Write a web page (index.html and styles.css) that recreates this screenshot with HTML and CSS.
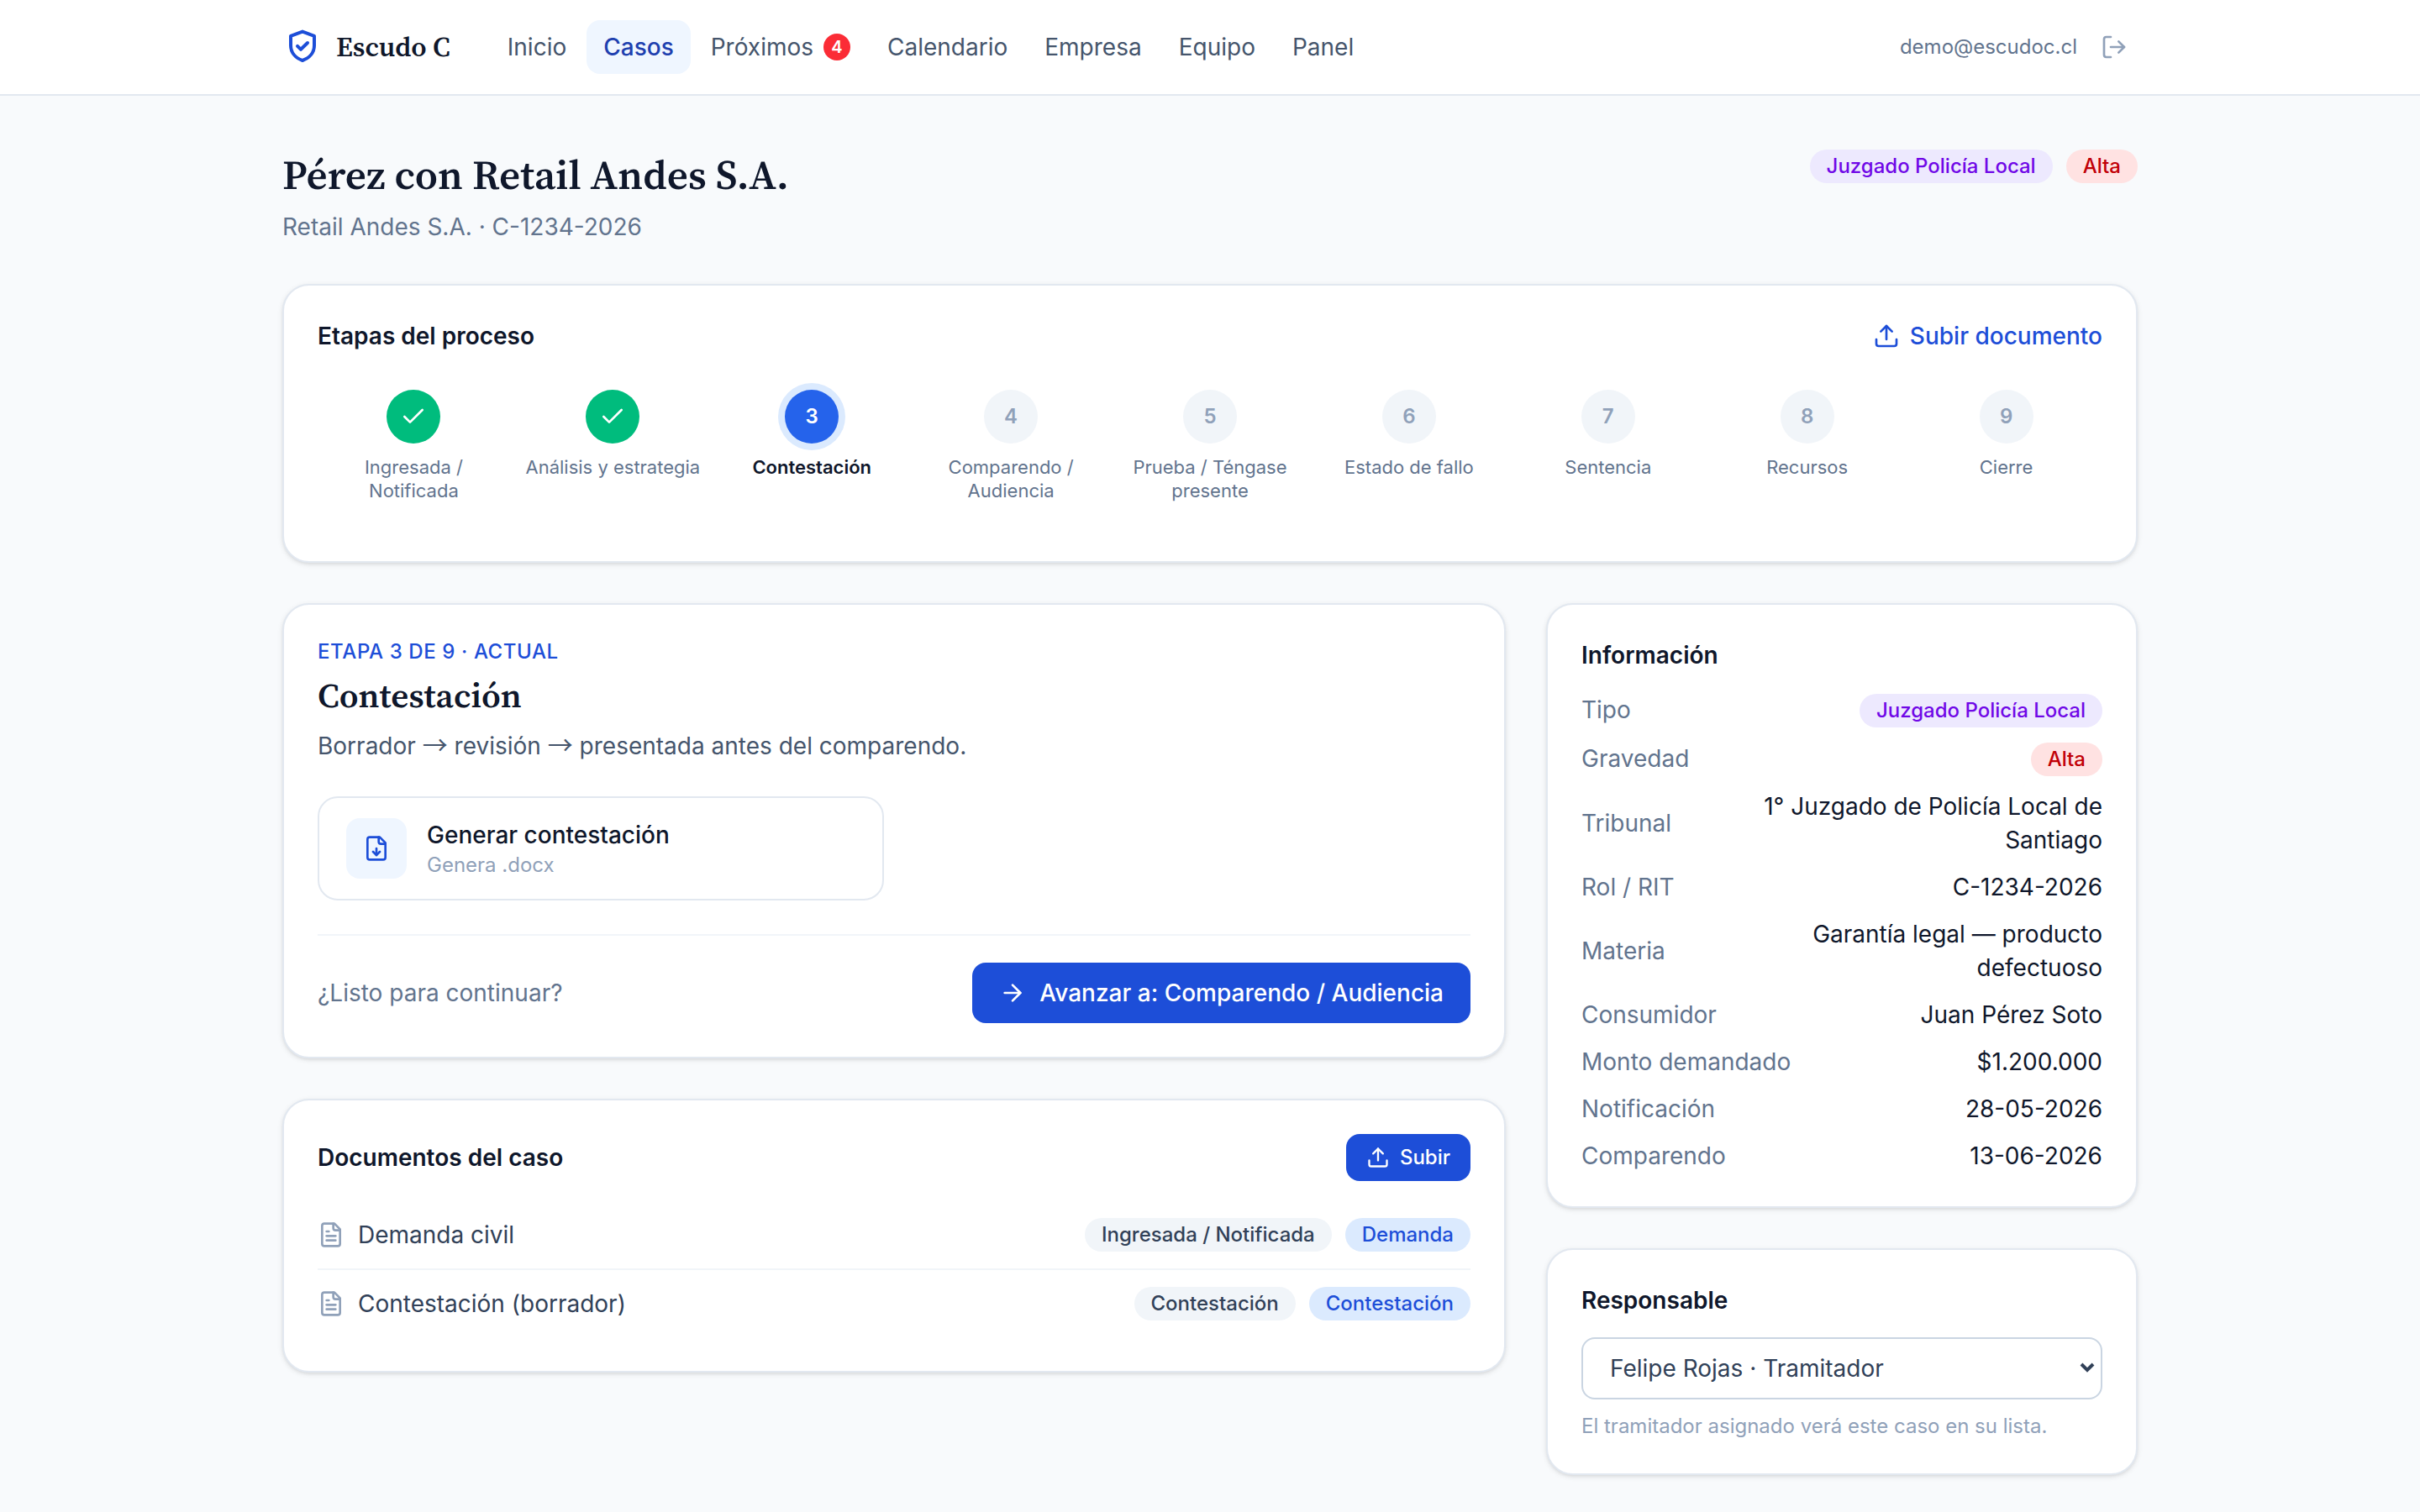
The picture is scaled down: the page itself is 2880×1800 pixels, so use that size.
FILE: index.html
```html
<!DOCTYPE html>
<html lang="es">
<head>
    <meta charset="UTF-8">
    <meta name="viewport" content="width=device-width, initial-scale=1.0">
    <title>Pérez con Retail Andes S.A. - Escudo C</title>
    <link rel="stylesheet" href="styles.css">
</head>
<body>
    <!-- Shared icons -->
    <svg class="sprite" aria-hidden="true">
        <symbol id="icon-shield" viewBox="0 0 24 24">
            <path d="M12 2.8 19 5.4V11c0 4.3-2.8 7.5-7 9-4.2-1.5-7-4.7-7-9V5.4Z"/>
            <path d="m9 11.4 2 2 4-3.9"/>
        </symbol>
        <symbol id="icon-logout" viewBox="0 0 24 24">
            <path d="M9 21H5a2 2 0 0 1-2-2V5a2 2 0 0 1 2-2h4"/>
            <path d="m16 17 5-5-5-5"/>
            <path d="M21 12H9"/>
        </symbol>
        <symbol id="icon-upload" viewBox="0 0 24 24">
            <path d="M12 3v12"/>
            <path d="m17 8-5-5-5 5"/>
            <path d="M21 15v4a2 2 0 0 1-2 2H5a2 2 0 0 1-2-2v-4"/>
        </symbol>
        <symbol id="icon-check" viewBox="0 0 24 24">
            <path d="M20 6 9 17l-5-5"/>
        </symbol>
        <symbol id="icon-arrow" viewBox="0 0 24 24">
            <path d="M5 12h14"/>
            <path d="m12 5 7 7-7 7"/>
        </symbol>
        <symbol id="icon-file-down" viewBox="0 0 24 24">
            <path d="M15 2H6a2 2 0 0 0-2 2v16a2 2 0 0 0 2 2h12a2 2 0 0 0 2-2V7Z"/>
            <path d="M14 2v4a2 2 0 0 0 2 2h4"/>
            <path d="M12 18v-6"/>
            <path d="m9 15 3 3 3-3"/>
        </symbol>
        <symbol id="icon-file-text" viewBox="0 0 24 24">
            <path d="M15 2H6a2 2 0 0 0-2 2v16a2 2 0 0 0 2 2h12a2 2 0 0 0 2-2V7Z"/>
            <path d="M14 2v4a2 2 0 0 0 2 2h4"/>
            <path d="M10 9H8"/>
            <path d="M16 13H8"/>
            <path d="M16 17H8"/>
        </symbol>
    </svg>

    <header class="topbar">
        <div class="topbar-inner">
            <a href="#" class="brand">
                <svg class="icon brand-icon" aria-hidden="true"><use href="#icon-shield"/></svg>
                <span>Escudo C</span>
            </a>
            <nav class="nav">
                <a href="#" class="nav-link">Inicio</a>
                <a href="#" class="nav-link active">Casos</a>
                <a href="#" class="nav-link">Próximos <span class="count">4</span></a>
                <a href="#" class="nav-link">Calendario</a>
                <a href="#" class="nav-link">Empresa</a>
                <a href="#" class="nav-link">Equipo</a>
                <a href="#" class="nav-link">Panel</a>
            </nav>
            <div class="account">
                <span>demo@escudoc.cl</span>
                <button type="button" class="logout" aria-label="Cerrar sesión">
                    <svg class="icon" aria-hidden="true"><use href="#icon-logout"/></svg>
                </button>
            </div>
        </div>
    </header>

    <main class="page">
        <div class="page-header">
            <div>
                <h1>Pérez con Retail Andes S.A.</h1>
                <p class="subtitle">Retail Andes S.A. · C-1234-2026</p>
            </div>
            <div class="badges">
                <span class="badge violet">Juzgado Policía Local</span>
                <span class="badge red">Alta</span>
            </div>
        </div>

        <section class="card">
            <div class="card-header">
                <h2>Etapas del proceso</h2>
                <button type="button" class="link-button">
                    <svg class="icon" aria-hidden="true"><use href="#icon-upload"/></svg>
                    Subir documento
                </button>
            </div>
            <ol class="steps">
                <li class="step done">
                    <span class="step-dot"><svg class="icon" aria-hidden="true"><use href="#icon-check"/></svg></span>
                    <span class="step-label">Ingresada / Notificada</span>
                </li>
                <li class="step done">
                    <span class="step-dot"><svg class="icon" aria-hidden="true"><use href="#icon-check"/></svg></span>
                    <span class="step-label">Análisis y estrategia</span>
                </li>
                <li class="step current">
                    <span class="step-dot">3</span>
                    <span class="step-label">Contestación</span>
                </li>
                <li class="step">
                    <span class="step-dot">4</span>
                    <span class="step-label">Comparendo / Audiencia</span>
                </li>
                <li class="step">
                    <span class="step-dot">5</span>
                    <span class="step-label">Prueba / Téngase presente</span>
                </li>
                <li class="step">
                    <span class="step-dot">6</span>
                    <span class="step-label">Estado de fallo</span>
                </li>
                <li class="step">
                    <span class="step-dot">7</span>
                    <span class="step-label">Sentencia</span>
                </li>
                <li class="step">
                    <span class="step-dot">8</span>
                    <span class="step-label">Recursos</span>
                </li>
                <li class="step">
                    <span class="step-dot">9</span>
                    <span class="step-label">Cierre</span>
                </li>
            </ol>
        </section>

        <div class="columns">
            <div class="column">
                <section class="card">
                    <p class="eyebrow">Etapa 3 de 9 · Actual</p>
                    <h2 class="stage-title">Contestación</h2>
                    <p class="stage-text">Borrador <span class="arrow">→</span> revisión <span class="arrow">→</span> presentada antes del comparendo.</p>
                    <div class="actions">
                        <button type="button" class="action">
                            <span class="action-icon"><svg class="icon" aria-hidden="true"><use href="#icon-file-down"/></svg></span>
                            <span class="action-body">
                                <span class="action-title">Generar contestación</span>
                                <span class="action-note">Genera .docx</span>
                            </span>
                        </button>
                    </div>
                    <div class="stage-footer">
                        <span>¿Listo para continuar?</span>
                        <button type="button" class="button">
                            <svg class="icon" aria-hidden="true"><use href="#icon-arrow"/></svg>
                            Avanzar a: Comparendo / Audiencia
                        </button>
                    </div>
                </section>

                <section class="card">
                    <div class="card-header">
                        <h2>Documentos del caso</h2>
                        <button type="button" class="button small">
                            <svg class="icon" aria-hidden="true"><use href="#icon-upload"/></svg>
                            Subir
                        </button>
                    </div>
                    <ul class="documents">
                        <li class="document">
                            <svg class="icon" aria-hidden="true"><use href="#icon-file-text"/></svg>
                            <span class="document-name">Demanda civil</span>
                            <span class="badge gray">Ingresada / Notificada</span>
                            <span class="badge blue">Demanda</span>
                        </li>
                        <li class="document">
                            <svg class="icon" aria-hidden="true"><use href="#icon-file-text"/></svg>
                            <span class="document-name">Contestación (borrador)</span>
                            <span class="badge gray">Contestación</span>
                            <span class="badge blue">Contestación</span>
                        </li>
                    </ul>
                </section>
            </div>

            <aside class="column">
                <section class="card">
                    <h2>Información</h2>
                    <dl class="info">
                        <div class="info-row"><dt>Tipo</dt><dd><span class="badge violet">Juzgado Policía Local</span></dd></div>
                        <div class="info-row"><dt>Gravedad</dt><dd><span class="badge red">Alta</span></dd></div>
                        <div class="info-row"><dt>Tribunal</dt><dd>1° Juzgado de Policía Local de Santiago</dd></div>
                        <div class="info-row"><dt>Rol / RIT</dt><dd>C-1234-2026</dd></div>
                        <div class="info-row"><dt>Materia</dt><dd>Garantía legal — producto defectuoso</dd></div>
                        <div class="info-row"><dt>Consumidor</dt><dd>Juan Pérez Soto</dd></div>
                        <div class="info-row"><dt>Monto demandado</dt><dd>$1.200.000</dd></div>
                        <div class="info-row"><dt>Notificación</dt><dd>28-05-2026</dd></div>
                        <div class="info-row"><dt>Comparendo</dt><dd>13-06-2026</dd></div>
                    </dl>
                </section>

                <section class="card">
                    <h2><label for="responsable">Responsable</label></h2>
                    <div class="select-wrap">
                        <select id="responsable">
                            <option>Felipe Rojas · Tramitador</option>
                        </select>
                        <svg class="chevron" viewBox="0 0 18 12" aria-hidden="true"><path d="m2 2 7 7 7-7"/></svg>
                    </div>
                    <p class="hint">El tramitador asignado verá este caso en su lista.</p>
                </section>
            </aside>
        </div>
    </main>
</body>
</html>
```

FILE: styles.css
```css
:root {
    --brand: #1d4ed8;
    --brand-light: #eff6ff;
    --slate-50: #f8fafc;
    --slate-100: #f1f5f9;
    --slate-200: #e2e8f0;
    --slate-300: #cad5e2;
    --slate-400: #90a1b9;
    --slate-500: #62748e;
    --slate-600: #45556c;
    --slate-700: #314158;
    --slate-900: #0f172b;
    --serif: "Source Serif 4", "Liberation Serif", serif;
}

* {
    margin: 0;
    padding: 0;
    box-sizing: border-box;
}

body {
    background: var(--slate-50);
    color: var(--slate-900);
    font-family: Inter, sans-serif;
    font-size: 28px;
    line-height: 40px;
}

a {
    color: inherit;
    text-decoration: none;
}

button,
select {
    font: inherit;
    color: inherit;
    background: none;
    border: none;
    cursor: pointer;
}

ol,
ul {
    list-style: none;
}

.sprite {
    display: none;
}

.icon {
    flex: none;
    width: 32px;
    height: 32px;
    fill: none;
    stroke: currentColor;
    stroke-width: 2;
    stroke-linecap: round;
    stroke-linejoin: round;
}

/* Top bar */
.topbar {
    background: #fff;
    border-bottom: 2px solid var(--slate-200);
}

.topbar-inner {
    display: flex;
    align-items: center;
    max-width: 2304px;
    margin: 0 auto;
    padding: 24px 48px;
}

.brand {
    display: flex;
    align-items: center;
    gap: 16px;
    margin-right: 48px;
    font-family: var(--serif);
    font-size: 33px;
    font-weight: 600;
}

.brand-icon {
    width: 48px;
    height: 48px;
    color: var(--brand);
}

.nav {
    display: flex;
    gap: 4px;
    color: var(--slate-600);
}

.nav-link {
    display: flex;
    align-items: center;
    gap: 12px;
    padding: 12px 20px;
    border-radius: 16px;
}

.nav-link.active {
    background: var(--brand-light);
    color: #1e40af;
    font-weight: 500;
}

.count {
    width: 32px;
    border-radius: 16px;
    background: #fb2c36;
    color: #fff;
    font-size: 20px;
    font-weight: 600;
    line-height: 32px;
    text-align: center;
}

.account {
    display: flex;
    align-items: center;
    gap: 16px;
    margin-left: auto;
    color: var(--slate-500);
    font-size: 24px;
}

.logout {
    display: flex;
    padding: 12px;
    color: var(--slate-400);
}

/* Page */
.page {
    max-width: 2304px;
    margin: 0 auto;
    padding: 64px 48px 44px;
}

.page-header {
    display: flex;
    justify-content: space-between;
    align-items: flex-start;
    margin-bottom: 48px;
}

h1 {
    font-family: var(--serif);
    font-size: 49px;
    font-weight: 600;
    line-height: 60px;
}

h2 {
    font-size: 28px;
    font-weight: 600;
    line-height: 40px;
}

.subtitle {
    margin-top: 12px;
    color: var(--slate-500);
}

.badges {
    display: flex;
    gap: 16px;
}

.badge {
    display: inline-flex;
    padding: 4px 20px;
    border-radius: 20px;
    font-size: 24px;
    font-weight: 500;
    line-height: 32px;
    white-space: nowrap;
}

.badge.violet {
    background: #ede9fe;
    color: #7008e7;
}

.badge.red {
    background: #ffe2e2;
    color: #c10007;
}

.badge.gray {
    background: var(--slate-100);
    color: var(--slate-700);
}

.badge.blue {
    background: #dbeafe;
    color: var(--brand);
}

/* Cards */
.card {
    padding: 40px;
    background: #fff;
    border: 2px solid var(--slate-200);
    border-radius: 32px;
    box-shadow: 0 2px 6px rgba(0, 0, 0, 0.1), 0 2px 4px -2px rgba(0, 0, 0, 0.1);
}

.card-header {
    display: flex;
    justify-content: space-between;
    align-items: center;
}

.link-button {
    display: flex;
    align-items: center;
    gap: 12px;
    color: var(--brand);
    font-weight: 500;
}

.button {
    display: flex;
    align-items: center;
    gap: 16px;
    padding: 16px 32px;
    border-radius: 16px;
    background: var(--brand);
    color: #fff;
    font-weight: 500;
}

.button.small {
    gap: 12px;
    padding: 12px 24px;
    font-size: 24px;
    line-height: 32px;
}

.button.small .icon {
    width: 28px;
    height: 28px;
}

/* Process steps */
.steps {
    display: flex;
    gap: 8px;
    padding: 44px 0 30px;
}

.step {
    display: flex;
    flex: 1;
    flex-direction: column;
    align-items: center;
    gap: 14px;
    color: var(--slate-500);
    text-align: center;
}

.step-dot {
    display: flex;
    align-items: center;
    justify-content: center;
    width: 64px;
    height: 64px;
    border-radius: 50%;
    background: var(--slate-100);
    color: var(--slate-400);
    font-size: 24px;
    font-weight: 600;
}

.step.done .step-dot {
    background: #00bc7d;
    color: #fff;
}

.step.current .step-dot {
    background: #2563eb;
    color: #fff;
    box-shadow: 0 0 0 8px #dbeafe;
}

.step-label {
    padding: 0 8px;
    font-size: 22px;
    line-height: 28px;
}

.step.current .step-label {
    color: var(--slate-900);
    font-weight: 600;
}

/* Columns */
.columns {
    display: grid;
    grid-template-columns: repeat(3, 1fr);
    gap: 48px;
    align-items: start;
    margin-top: 48px;
}

.column {
    display: grid;
    gap: 48px;
}

.column:first-child {
    grid-column: span 2;
}

/* Current stage */
.eyebrow {
    color: var(--brand);
    font-size: 24px;
    font-weight: 500;
    letter-spacing: 0.025em;
    line-height: 32px;
    text-transform: uppercase;
}

.stage-title {
    margin-top: 8px;
    font-family: var(--serif);
    font-size: 41px;
    line-height: 56px;
}

.stage-text {
    margin-top: 12px;
    color: var(--slate-600);
}

.arrow {
    font-family: "Noto Sans CJK JP", sans-serif;
    font-size: 30px;
    line-height: 1;
}

.actions {
    display: grid;
    grid-template-columns: 1fr 1fr;
    gap: 24px;
    margin: 40px 0;
}

.action {
    display: flex;
    align-items: center;
    gap: 24px;
    padding: 24px 32px;
    border: 2px solid var(--slate-200);
    border-radius: 24px;
    text-align: left;
}

.action-icon {
    padding: 20px;
    border-radius: 16px;
    background: var(--brand-light);
    color: var(--brand);
}

.action-icon .icon {
    display: block;
}

.action-body {
    display: flex;
    flex-direction: column;
}

.action-title {
    font-weight: 500;
}

.action-note {
    color: var(--slate-400);
    font-size: 24px;
    line-height: 32px;
}

.stage-footer {
    display: flex;
    justify-content: space-between;
    align-items: center;
    padding-top: 32px;
    border-top: 2px solid var(--slate-100);
    color: var(--slate-500);
}

/* Documents */
.documents {
    margin-top: 24px;
}

.document {
    display: flex;
    align-items: center;
    gap: 16px;
    padding: 20px 0;
    color: var(--slate-400);
}

.document + .document {
    border-top: 2px solid var(--slate-100);
}

.document-name {
    flex: 1;
    color: var(--slate-700);
}

/* Case info */
.info {
    display: grid;
    gap: 16px;
    margin-top: 24px;
}

.info-row {
    display: flex;
    justify-content: space-between;
    align-items: center;
    gap: 32px;
}

.info-row dt {
    color: var(--slate-500);
}

.info-row dd {
    text-align: right;
}

/* Assignee */
.select-wrap {
    position: relative;
    margin-top: 24px;
}

.select-wrap select {
    display: block;
    width: 100%;
    height: 74px;
    padding: 0 48px 0 32px;
    border: 2px solid var(--slate-300);
    border-radius: 16px;
    background: #fff;
    color: var(--slate-700);
    appearance: none;
}

.chevron {
    position: absolute;
    top: 30px;
    right: 9px;
    width: 18px;
    height: 12px;
    fill: none;
    stroke: var(--slate-700);
    stroke-width: 4;
    pointer-events: none;
}

.hint {
    margin-top: 16px;
    color: var(--slate-400);
    font-size: 24px;
    line-height: 32px;
}
```
